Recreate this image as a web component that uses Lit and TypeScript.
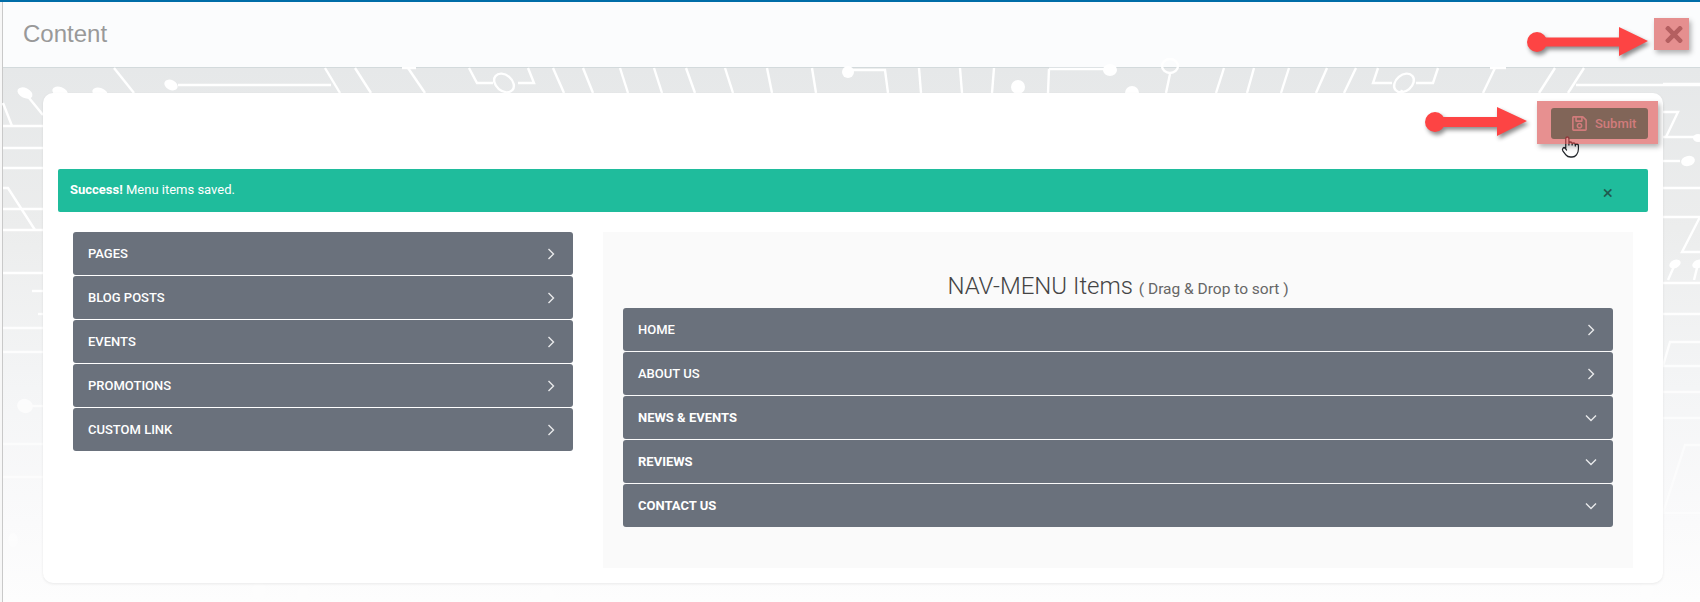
import { LitElement, html, css, svg } from "lit";
import { customElement } from "lit/decorators.js";

const TRACES = [
  // top strip, left part
  "M114 68L134 93", "M178 85H331", "M325 68L340 93", "M355 68L371 93",
  "M402 68H416", "M408 68L425 93", "M469 68L477 83H493", "M518 83H534L528 68", "M507 92L509 96",
  "M553 68L564 93", "M583 68L593 93", "M620 68L628 93", "M654 68L662 93", "M686 68L695 93",
  "M725 68L733 93", "M767 68L772 93", "M812 68L816 93",
  // top strip, right part
  "M853 70H885L888 93", "M919 68L921 93", "M960 68L962 93", "M994 68L992 93", "M1049 69L1048 93", "M1049 69H1105",
  "M1170 74L1166 93", "M1224 68L1216 93", "M1254 68L1247 93", "M1289 68L1281 93", "M1327 68L1316 93", "M1356 68L1344 93",
  "M1378 68L1373 83H1392", "M1416 83H1433L1438 68", "M1402 90L1400 96", "M1490 68H1506", "M1495 68L1483 93",
  "M1555 68L1539 93", "M1584 68L1568 93", "M1576 85H1700",
  // left strip
  "M3 103L12 126", "M3 126H43", "M3 148H43", "M3 168H43", "M3 209H43", "M3 230H43", "M3 273H43", "M3 328H43", "M3 352H43",
  "M3 444H43", "M3 477H43", "M3 188H8L35 230", "M25 93L43 115", "M32 291H43", "M38 314H43", "M25 406H43",
  // right strip
  "M1663 84H1700", "M1663 112H1678L1666 137", "M1663 137H1700", "M1663 161H1680", "M1663 188H1700", "M1663 217H1700",
  "M1700 217L1682 252H1700", "M1675 264L1668 280", "M1698 264L1694 280", "M1663 283H1700", "M1663 314H1700",
  "M1700 342H1670L1663 366H1700", "M1663 392H1700", "M1663 418H1700", "M1700 445H1685L1663 513", "M1663 513H1700",
];

const BLOBS: [number, number, number, number, number][] = [
  [171, 85, 7, 5, 25], [25, 93, 8, 5, 25], [60, 92, 8, 5, 20], [100, 93, 8, 5, 20],
  [848, 72, 6, 6, 0], [1110, 70, 7, 6, 0], [1018, 87, 7, 7, 0], [1132, 93, 7, 7, 0],
  [1688, 161, 7, 5, -15], [1698, 138, 5, 4, 0], [1675, 264, 6, 4, -25], [1698, 264, 6, 4, -25],
  [25, 406, 8, 7, 20], [13, 540, 5, 7, 0], [259, 590, 7, 8, 0], [303, 593, 6, 7, 0], [547, 595, 7, 8, 0], [1647, 590, 7, 8, 0],
];

const LEFT = ["Pages", "Blog Posts", "Events", "Promotions", "Custom Link"];
const RIGHT: [string, boolean][] = [
  ["Home", false], ["About Us", false], ["News & Events", true], ["Reviews", true], ["Contact Us", true],
];

@customElement("app-root")
export class AppRoot extends LitElement {
  static styles = css`
    :host {
      display: block;
      position: relative;
      width: 1700px;
      height: 602px;
      overflow: hidden;
      background: #f7f7f7;
      font-family: Roboto, "Liberation Sans", sans-serif;
    }
    .shell {
      position: relative;
      height: 602px;
      margin-left: 2px;
      border-left: 1px solid #c9c9c9;
      display: flex;
      flex-direction: column;
      box-sizing: border-box;
    }
    .topline { height: 2px; margin-left: -3px; background: #006da8; flex: none; }
    .header {
      flex: none;
      height: 66px;
      box-sizing: border-box;
      background: #fbfcfd;
      border-bottom: 1px solid #d3dadc;
      display: flex;
      align-items: center;
      justify-content: space-between;
      padding: 0 16px 2px 20px;
    }
    .title {
      font-family: "Liberation Sans", Arial, sans-serif;
      font-size: 24px;
      color: #999;
    }
    .close { width: 20px; height: 25px; fill: #7f8488; display: block; margin-top: 2px; }
    .main {
      flex: 1;
      position: relative;
      background: linear-gradient(#e6e8e9 0%, #eceded 30%, #f4f5f6 60%, #fafafb 85%, #fdfdfd 100%);
      padding: 25px 37px 19px 40px;
      min-height: 0;
    }
    .traces {
      position: absolute;
      left: -3px;
      top: -68px;
      width: 1700px;
      height: 602px;
      -webkit-mask-image: linear-gradient(#000 0%, #000 45%, rgba(0, 0, 0, 0.55) 75%, rgba(0, 0, 0, 0.3) 100%);
      mask-image: linear-gradient(#000 0%, #000 45%, rgba(0, 0, 0, 0.55) 75%, rgba(0, 0, 0, 0.3) 100%);
    }
    .traces path { fill: none; stroke: #fff; stroke-width: 2.4; }
    .traces ellipse { fill: #fff; }
    .traces .ring { fill: none; stroke: #fff; stroke-width: 2.4; }
    .card {
      position: relative;
      height: 490px;
      box-sizing: border-box;
      background: #fff;
      border-radius: 10px;
      box-shadow: 0 1px 3px rgba(0, 0, 0, 0.08);
      padding: 15px;
    }
    .toolbar { display: flex; justify-content: flex-end; height: 31px; margin-bottom: 30px; }
    .submit {
      width: 97px;
      height: 31px;
      box-sizing: border-box;
      border: 0;
      border-radius: 3px;
      background: #009373;
      color: #c8cbcb;
      display: flex;
      align-items: center;
      padding: 0 0 0 21px;
      gap: 8px;
      font: 500 13px Roboto, sans-serif;
    }
    .submit svg { width: 15px; height: 17px; fill: #c8cbcb; }
    .alert {
      height: 43px;
      box-sizing: border-box;
      background: #1fbc9c;
      border-radius: 2px;
      color: #fff;
      font-size: 13px;
      display: flex;
      align-items: center;
      justify-content: space-between;
      padding: 0 35px 0 12px;
      margin-bottom: 20px;
    }
    .alert .msg { margin-top: -2px; }
    .alert b { font-weight: 700; }
    .alert .x { color: #1f5a50; font-size: 19px; line-height: 1; margin-top: 3px; }
    .cols { display: grid; grid-template-columns: 500px 1030px; gap: 30px; padding: 0 15px; }
    .list { display: flex; flex-direction: column; gap: 1px; }
    .row {
      height: 43px;
      box-sizing: border-box;
      background: #6a717c;
      border-radius: 3px;
      color: #fff;
      display: flex;
      align-items: center;
      justify-content: space-between;
      padding: 0 15px;
      font-size: 13px;
      font-weight: 500;
      text-transform: uppercase;
    }
    .row.open { font-weight: 700; }
    .row svg { width: 14px; height: 14px; fill: none; stroke: #e8e9eb; stroke-width: 1.4; }
    .panel {
      height: 336px;
      box-sizing: border-box;
      background: #fafafa;
      padding: 39px 20px 0;
    }
    .heading {
      height: 37px;
      margin: 0;
      text-align: center;
      font-size: 24px;
      line-height: 30px;
      font-weight: 300;
      color: #444;
    }
    .heading small { font-size: 15.5px; font-weight: 400; color: #666; }
    .hand { position: absolute; left: 1561px; top: 135px; width: 19px; height: 24px; }
    .hand path { fill: #fff; stroke: #23262b; stroke-width: 1.5; stroke-linecap: round; stroke-linejoin: round; }
    .mark {
      position: absolute;
      background: rgba(215, 70, 70, 0.6);
      box-shadow: 2px 3px 5px rgba(0, 0, 0, 0.3);
    }
    .mark.one { left: 1654px; top: 18px; width: 35px; height: 32px; }
    .mark.two { left: 1537px; top: 101px; width: 121px; height: 43px; }
    .arrows { position: absolute; left: 0; top: 0; width: 1700px; height: 602px; pointer-events: none; }
    .arrows path, .arrows circle { fill: #fd4444; }
    .arrows g { filter: drop-shadow(2px 3px 2px rgba(0, 0, 0, 0.45)); }
  `;

  private chevron(open: boolean) {
    return open
      ? html`<svg viewBox="0 0 14 14"><path d="M2 4.5L7 9.5L12 4.5"/></svg>`
      : html`<svg viewBox="0 0 14 14"><path d="M4.5 2L9.5 7L4.5 12"/></svg>`;
  }

  render() {
    return html`
      <div class="shell">
        <div class="topline"></div>
        <header class="header">
          <div class="title">Content</div>
          <svg class="close" viewBox="0 0 352 512"><path d="M242.72 256l100.07-100.07c12.28-12.28 12.28-32.19 0-44.48l-22.24-22.24c-12.28-12.28-32.19-12.28-44.48 0L176 189.28 75.93 89.21c-12.28-12.28-32.19-12.28-44.48 0L9.21 111.45c-12.28 12.28-12.28 32.19 0 44.48L109.28 256 9.21 356.07c-12.28 12.28-12.28 32.19 0 44.48l22.24 22.24c12.28 12.28 32.2 12.28 44.48 0L176 322.72l100.07 100.07c12.28 12.28 32.2 12.28 44.48 0l22.24-22.24c12.28-12.28 12.28-32.19 0-44.48L242.72 256z"/></svg>
        </header>
        <main class="main">
          <svg class="traces" viewBox="0 0 1700 602">
            ${TRACES.map((d) => svg`<path d=${d}></path>`)}
            ${BLOBS.map(([x, y, rx, ry, a]) => svg`<ellipse cx=${x} cy=${y} rx=${rx} ry=${ry} transform=${`rotate(${a} ${x} ${y})`}></ellipse>`)}
            <ellipse class="ring" cx="504" cy="83" rx="11" ry="8" transform="rotate(40 504 83)"></ellipse>
            <ellipse class="ring" cx="1404" cy="83" rx="11" ry="8" transform="rotate(-40 1404 83)"></ellipse>
            <ellipse class="ring" cx="1170" cy="66" rx="8" ry="7"></ellipse>
          </svg>
          <section class="card">
            <div class="toolbar">
              <button class="submit">
                <svg viewBox="0 0 448 512"><path d="M433.941 129.941l-83.882-83.882A48 48 0 0 0 316.118 32H48C21.49 32 0 53.49 0 80v352c0 26.51 21.49 48 48 48h352c26.51 0 48-21.49 48-48V163.882a48 48 0 0 0-14.059-33.941zM272 80v80H144V80h128zm122 352H54a6 6 0 0 1-6-6V86a6 6 0 0 1 6-6h42v104c0 13.255 10.745 24 24 24h176c13.255 0 24-10.745 24-24V83.882l78.243 78.243a6 6 0 0 1 1.757 4.243V426a6 6 0 0 1-6 6zM224 232c-48.523 0-88 39.477-88 88s39.477 88 88 88 88-39.477 88-88-39.477-88-88-88zm0 128c-22.056 0-40-17.944-40-40s17.944-40 40-40 40 17.944 40 40-17.944 40-40 40z"/></svg>
                Submit
              </button>
            </div>
            <div class="alert">
              <span class="msg"><b>Success!</b> Menu items saved.</span>
              <span class="x">×</span>
            </div>
            <div class="cols">
              <div class="list">
                ${LEFT.map((t) => html`<div class="row"><span>${t}</span>${this.chevron(false)}</div>`)}
              </div>
              <div class="panel">
                <h3 class="heading">NAV-MENU Items <small>( Drag &amp; Drop to sort )</small></h3>
                <div class="list">
                  ${RIGHT.map(([t, open]) => html`<div class="row ${open ? "open" : ""}"><span>${t}</span>${this.chevron(open)}</div>`)}
                </div>
              </div>
            </div>
          </section>
        </main>
      </div>
      <svg class="hand" viewBox="0 0 24 24" preserveAspectRatio="none"><path d="M18 11v-1a2 2 0 0 0-4 0M14 10V9a2 2 0 0 0-4 0v1M10 9.5V4a2 2 0 0 0-4 0v10M18 11a2 2 0 1 1 4 0v3a8 8 0 0 1-8 8h-2c-2.8 0-4.5-.86-5.99-2.34l-3.6-3.6a2 2 0 0 1 2.83-2.82L7 15"/></svg>
      <div class="mark one"></div>
      <div class="mark two"></div>
      <svg class="arrows" viewBox="0 0 1700 602">
        <g>
          <circle cx="1537" cy="42" r="10"></circle>
          <path d="M1537 37.5H1619V27L1648 41L1619 56V46.5H1537Z"></path>
        </g>
        <g>
          <circle cx="1435" cy="122" r="10"></circle>
          <path d="M1435 117H1497V107L1527 121L1497 136V127H1435Z"></path>
        </g>
      </svg>
    `;
  }
}
